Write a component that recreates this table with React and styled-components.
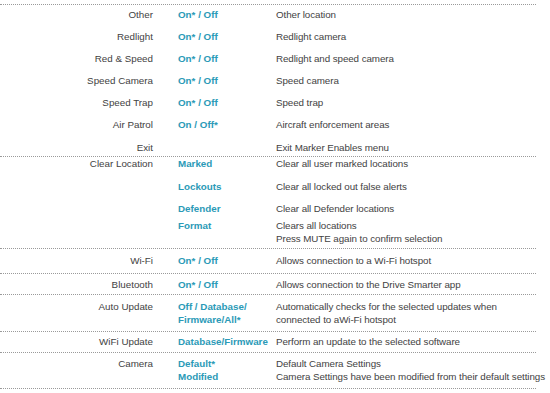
import styled, { createGlobalStyle } from "styled-components";

const GlobalStyle = createGlobalStyle`
  body {
    margin: 0;
    background: #fff;
    font-family: "Liberation Sans", Arial, sans-serif;
  }
`;

const sections = [
  {
    pt: 2.5,
    pb: 2.3,
    rows: [
      { label: "Other", value: "On* / Off", desc: ["Other location"] },
      { label: "Redlight", value: "On* / Off", desc: ["Redlight camera"] },
      { label: "Red & Speed", value: "On* / Off", desc: ["Redlight and speed camera"] },
      { label: "Speed Camera", value: "On* / Off", desc: ["Speed camera"] },
      { label: "Speed Trap", value: "On* / Off", desc: ["Speed trap"] },
      { label: "Air Patrol", value: "On / Off*", desc: ["Aircraft enforcement areas"] },
      { label: "Exit", value: "", desc: ["Exit Marker Enables menu"] },
    ],
  },
  {
    pt: 0.5,
    pb: 2.5,
    rows: [
      { label: "Clear Location", value: "Marked", desc: ["Clear all user marked locations"] },
      { label: "", value: "Lockouts", desc: ["Clear all locked out false alerts"] },
      { label: "", value: "Defender", desc: ["Clear all Defender locations"] },
      {
        label: "",
        value: "Format",
        pull: 4.6,
        desc: ["Clears all locations", "Press MUTE again to confirm selection"],
      },
    ],
  },
  {
    pt: 5.5,
    pb: 5.5,
    rows: [{ label: "Wi-Fi", value: "On* / Off", desc: ["Allows connection to a Wi-Fi hotspot"] }],
  },
  {
    pt: 4.5,
    pb: 2.5,
    rows: [
      { label: "Bluetooth", value: "On* / Off", desc: ["Allows connection to the Drive Smarter app"] },
    ],
  },
  {
    pt: 5.5,
    pb: 4.5,
    rows: [
      {
        label: "Auto Update",
        value: ["Off / Database/", "Firmware/All*"],
        desc: ["Automatically checks for the selected updates when", "connected to aWi-Fi hotspot"],
      },
    ],
  },
  {
    pt: 3,
    pb: 4,
    rows: [
      {
        label: "WiFi Update",
        value: "Database/Firmware",
        desc: ["Perform an update to the selected software"],
      },
    ],
  },
  {
    pt: 4.5,
    pb: 4.5,
    rows: [
      { label: "Camera", value: "Default*", desc: ["Default Camera Settings"] },
      {
        label: "",
        value: "Modified",
        pull: 9.2,
        desc: ["Camera Settings have been modified from their default settings"],
      },
    ],
  },
];

function Lines({ items }) {
  const list = Array.isArray(items) ? items : [items];
  return list.map((t, i) => (
    <span key={i}>
      {t}
      {i < list.length - 1 && <br />}
    </span>
  ));
}

export default function App() {
  return (
    <>
      <GlobalStyle />
      <Table>
        {sections.map((s, i) => (
          <Section key={i} $pt={s.pt} $pb={s.pb}>
            {s.rows.map((r, j) => (
              <Row key={j} $pull={r.pull || 0}>
                <Label>{r.label}</Label>
                <Value>
                  <Lines items={r.value} />
                </Value>
                <Desc>
                  <Lines items={r.desc} />
                </Desc>
              </Row>
            ))}
          </Section>
        ))}
      </Table>
    </>
  );
}

const Table = styled.div`
  width: 536px;
  margin-top: 4px;
  border-top: 1px dotted #9a9a9a;
  font-size: 9.8px;
  line-height: 13px;
  color: #424242;
`;

const Section = styled.div`
  display: flex;
  flex-direction: column;
  gap: 9.2px;
  padding: ${(p) => p.$pt}px 0 ${(p) => p.$pb}px;
  border-bottom: 1px dotted #9a9a9a;
`;

const Row = styled.div`
  display: grid;
  grid-template-columns: 153px 123px 1fr;
  margin-top: ${(p) => -p.$pull}px;
`;

const Label = styled.div`
  text-align: right;
  white-space: nowrap;
`;

const Value = styled.div`
  padding-left: 25px;
  white-space: nowrap;
  color: #2b9ab7;
  font-weight: 700;
`;

const Desc = styled.div`
  white-space: nowrap;
  letter-spacing: -0.08px;
`;
